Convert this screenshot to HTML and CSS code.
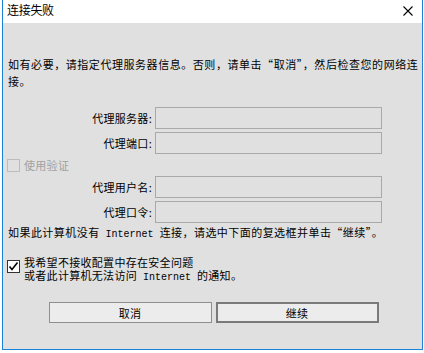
FILE: index.html
```html
<!DOCTYPE html>
<html>
<head>
  <title>连接失败</title>
  <link rel="stylesheet" href="styles.css">
</head>
<body>
  <!-- dialog window -->
  <div class="window">
    <div class="titlebar">
      <span class="title">连接失败</span>
      <svg class="close" width="10" height="10" viewBox="0 0 10 10">
        <path d="M0.5 0.5 L9.5 9.5 M9.5 0.5 L0.5 9.5" stroke="#000" stroke-width="1.1" fill="none"/>
      </svg>
    </div>

    <div class="content">
      <p class="intro">如有必要，请指定代理服务器信息。否则，请单击“取消”，然后检查您的网络连<br>接。</p>

      <div class="form">
        <label>代理服务器:</label>
        <input type="text" disabled>
        <label>代理端口:</label>
        <input type="text" disabled>

        <div class="check disabled">
          <span class="box"></span>
          <span class="check-text">使用验证</span>
        </div>

        <label>代理用户名:</label>
        <input type="text" disabled>
        <label>代理口令:</label>
        <input type="text" disabled>
      </div>

      <p class="note">如果此计算机没有<span class="en"> Internet </span>连接，请选中下面的复选框并单击“继续”。</p>

      <div class="check checked">
        <span class="box">
          <svg width="11" height="11" viewBox="0 0 11 11">
            <path d="M1.5 5.5 L4 8.5 L9.5 1.5" stroke="#000" stroke-width="1.6" fill="none"/>
          </svg>
        </span>
        <span class="check-text">我希望不接收配置中存在安全问题<br>或者此计算机无法访问<span class="en"> Internet </span>的通知。</span>
      </div>

      <div class="buttons">
        <button>取消</button>
        <button class="default">继续</button>
      </div>
    </div>
  </div>
</body>
</html>
```

FILE: styles.css
```css
body {
  margin: 0;
  background: #fff;
  font-family: "Noto Sans CJK SC", "Liberation Sans", sans-serif;
  font-size: 11px;
  letter-spacing: 0.3px;
  color: #000;
}

.window {
  width: 421px;
  height: 350px;
  margin-left: 2px;
  box-sizing: border-box;
  border: 1px solid #1883d7;
  border-top: none;
  display: flex;
  flex-direction: column;
}

.titlebar {
  height: 23px;
  background: #fff;
  display: flex;
  align-items: flex-start;
  justify-content: space-between;
}

.title {
  font-size: 12px;
  letter-spacing: -0.3px;
  line-height: 20px;
  padding-left: 4px;
}

.close {
  margin-top: 6px;
  margin-right: 9px;
}

.content {
  flex: 1;
  background: #e0e0e0;
}

.intro {
  margin: 0;
  padding: 33px 5px 0;
  line-height: 17px;
  letter-spacing: 0.55px;
  white-space: nowrap;
}

.form {
  margin-top: 17px;
  display: grid;
  grid-template-columns: 150px 227px;
  grid-template-rows: 22px 22px 16px 22px 22px;
  column-gap: 2px;
  row-gap: 3px;
}

.form label {
  text-align: right;
  line-height: 22px;
  padding-right: 1px;
}

.form input {
  margin: 0;
  padding: 0;
  width: 227px;
  height: 22px;
  box-sizing: border-box;
  border: 1px solid #a9a9a9;
  background: transparent;
}

.check {
  display: flex;
  align-items: flex-start;
  padding-left: 4px;
}

.form .check {
  grid-column: 1 / -1;
  align-items: center;
}

.box {
  width: 13px;
  height: 13px;
  box-sizing: border-box;
  border: 1px solid #333;
  background: #fff;
  display: flex;
  align-items: center;
  justify-content: center;
  flex-shrink: 0;
}

.check-text {
  margin-left: 4px;
}

.check.disabled .box {
  border-color: #bcbcbc;
  background: transparent;
}

.check.disabled .check-text {
  color: #a0a0a0;
  line-height: 16px;
}

.note {
  margin: 1px 0 0;
  padding-left: 5px;
  line-height: 17px;
  letter-spacing: 0.45px;
  white-space: nowrap;
}

.en {
  font-family: "Liberation Mono", monospace;
  font-size: 10px;
  letter-spacing: 0;
}

.check.checked {
  margin-top: 13px;
}

.check.checked .box {
  margin-top: 4px;
}

.check.checked .check-text {
  line-height: 13px;
}

.buttons {
  margin-top: 18px;
  display: flex;
  justify-content: center;
  gap: 4px;
  padding-left: 2px;
}

button {
  width: 163px;
  height: 21px;
  margin: 0;
  padding: 0;
  box-sizing: border-box;
  border: 1px solid #8f8f8f;
  background: #ececec;
  font-family: inherit;
  font-size: 11px;
  letter-spacing: 0.3px;
  color: #000;
}

button.default {
  border: 2px solid #7a7a7a;
}
```
